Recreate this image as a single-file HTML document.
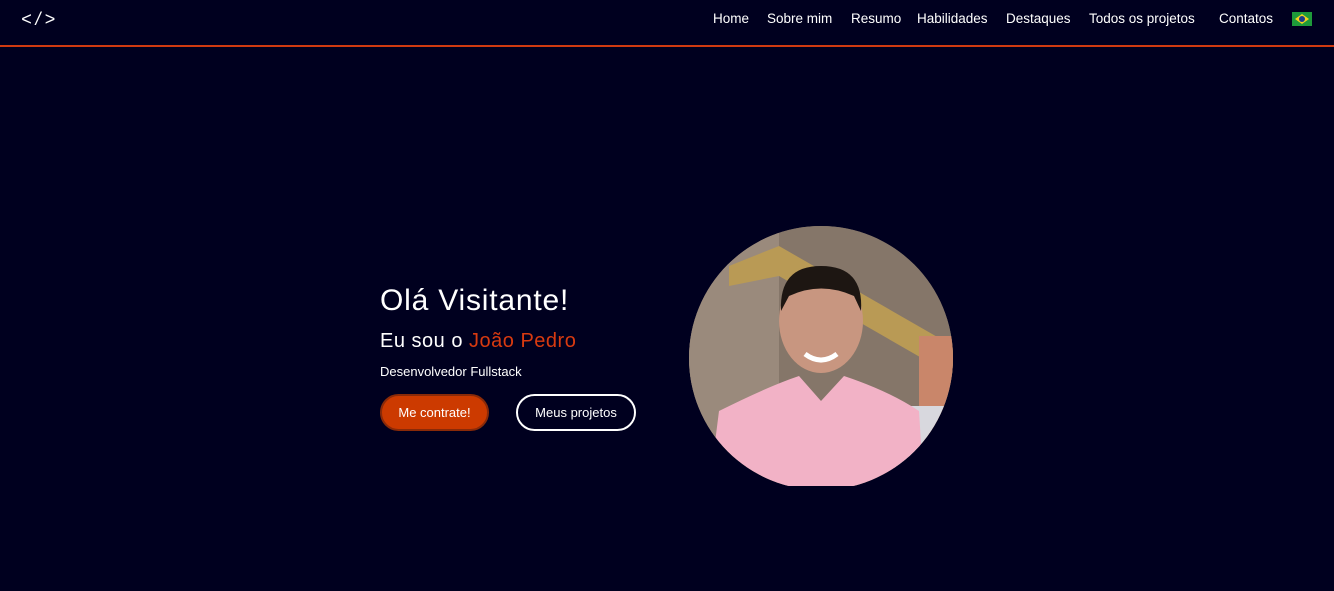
<!DOCTYPE html>
<html><head><meta charset="utf-8"><style>
*{margin:0;padding:0;box-sizing:border-box}
body{width:1334px;height:591px;background:#00001f;overflow:hidden;position:relative;font-family:"Liberation Sans",sans-serif;color:#fff}
.hdr{position:absolute;left:0;top:0;width:1334px;height:47px;border-bottom:2px solid #d03a10;}
.logo{position:absolute;left:21px;top:9px;font-size:18px;letter-spacing:4px;font-style:italic}
.nav a{position:absolute;top:11px;font-size:13.5px;color:#fff;text-decoration:none;white-space:nowrap}
.flag{position:absolute;left:1292px;top:12px;width:20px;height:14px;background:#1e9a3a}
.flag:before{content:"";position:absolute;left:3px;top:2px;width:14px;height:10px;background:#f4d21e;clip-path:polygon(50% 0,100% 50%,50% 100%,0 50%)}
.flag:after{content:"";position:absolute;left:7px;top:4px;width:6px;height:6px;border-radius:50%;background:#1a3c8c}
.t{position:absolute;white-space:nowrap}
.btn{position:absolute;top:394px;height:37px;border-radius:19px;font-size:13px;display:flex;align-items:center;justify-content:center}
.photo{position:absolute;left:689px;top:226px;width:264px;height:264px;border-radius:50%;overflow:hidden;clip-path:inset(0 0 4px 0);background:#7a6c62}
</style></head><body>
<div class="hdr"></div>
<div class="logo">&lt;/&gt;</div>
<div class="nav">
<a style="left:713px">Home</a>
<a style="left:767px">Sobre mim</a>
<a style="left:851px">Resumo</a>
<a style="left:917px">Habilidades</a>
<a style="left:1006px">Destaques</a>
<a style="left:1089px">Todos os projetos</a>
<a style="left:1219px">Contatos</a>
</div>
<div class="flag"></div>
<div class="t" style="left:380px;top:284px;font-size:30px;letter-spacing:0.8px">Olá Visitante!</div>
<div class="t" style="left:380px;top:330px;font-size:20px;letter-spacing:0.5px">Eu sou o <span style="color:#d83a10">João Pedro</span></div>
<div class="t" style="left:380px;top:364px;font-size:13px">Desenvolvedor Fullstack</div>
<div class="btn" style="left:380px;width:109px;background:#cc3a00;border:2px solid #8a2a08">Me contrate!</div>
<div class="btn" style="left:516px;width:120px;border:2px solid #fff">Meus projetos</div>
<div class="photo">
<svg width="264" height="264" viewBox="0 0 264 264">
<rect width="264" height="264" fill="#857669"/>
<rect x="0" y="0" width="90" height="264" fill="#9a8a7c"/>
<polygon points="40,40 90,20 264,120 264,150 90,50 40,60" fill="#b99a55"/>
<rect x="230" y="110" width="34" height="154" fill="#c9866a"/>
<rect x="205" y="180" width="59" height="84" fill="#d8d8de"/>
<ellipse cx="132" cy="95" rx="42" ry="52" fill="#c89680"/>
<path d="M92,85 Q90,40 132,40 Q175,40 172,85 L165,70 Q132,55 100,70 Z" fill="#1d1612"/>
<path d="M116,128 Q132,140 148,128" stroke="#fff" stroke-width="5" fill="none"/>
<path d="M20,264 L30,185 Q80,160 110,150 L132,175 L155,150 Q200,165 230,185 L235,264 Z" fill="#f2b2c6"/>
</svg>
</div>
</body></html>
